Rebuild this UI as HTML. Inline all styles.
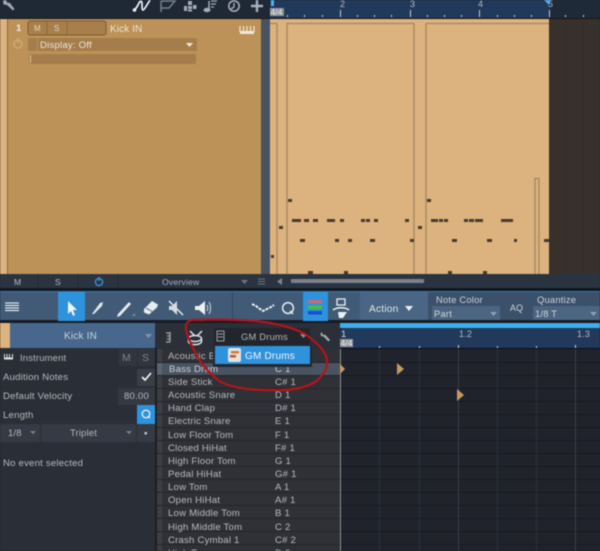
<!DOCTYPE html>
<html><head><meta charset="utf-8"><style>
html,body{margin:0;padding:0;background:#22262e;width:600px;height:551px;overflow:hidden}
svg{display:block;filter:blur(.4px)}
text{font-family:"Liberation Sans",sans-serif;font-size:9.6px;fill:#b7babe;letter-spacing:.2px}
.w{fill:none;stroke:#e8ebee;stroke-width:1.6}
.n{fill:#4a3a2c}
</style></head><body>
<svg width="600" height="551" viewBox="0 0 600 551" xmlns="http://www.w3.org/2000/svg">
<!-- arrange top bar -->
<rect width="270" height="18" fill="#1f2936"/>
<rect x="270" width="280" height="18" fill="#21395a"/>
<rect x="550" width="50" height="18" fill="#1f2a39"/>
<rect y="18" width="600" height="1" fill="#14181d"/>
<!-- top icons -->
<path d="M6 0l1.500 3 2-.5 5 6.500-1.500 1.500-6-5.500-3.500-.5-.5-4z" fill="#9fa7b0"/>
<path d="M134 10c2-1 3-3 5-7 1-2 3-3 3 1 0 3 0 6 1 6s4-5 7-10" fill="none" stroke="#eef1f4" stroke-width="1.700"/>
<circle cx="134.500" cy="10" r="1.800" fill="#eef1f4"/>
<path d="M161 12V1M161 1h14l-6 7h-8" fill="none" stroke="#77828f" stroke-width="1.400"/>
<path d="M188 1h4v4h-4zM193 5h3.500v4h-3.500zM188 6h4v3h-4zM184 6h3v5h-3zM188 9.500h4v2h-4z" fill="#a3abb4"/>
<path d="M209 1v9" stroke="#a3abb4" stroke-width="1.500"/><ellipse cx="207" cy="10" rx="3.500" ry="2.200" fill="#a3abb4"/>
<path d="M211 1h6M211 4h5M211 7h3" stroke="#a3abb4" stroke-width="1.300"/>
<circle cx="234" cy="6" r="5.200" fill="none" stroke="#a3abb4" stroke-width="1.600"/><path d="M234 3v4l-3 2" stroke="#a3abb4" stroke-width="1.400" fill="none"/>
<path d="M257 0v12M251 6h12" stroke="#a8b0b9" stroke-width="2.400"/>
<!-- ruler ticks -->
<g fill="#c8d0d9">
<rect x="340" y="10" width="1" height="7"/><rect x="410" y="10" width="1" height="7"/><rect x="479" y="10" width="1" height="7"/><rect x="549" y="10" width="1" height="7"/>
<rect x="304" y="15" width="1" height="2"/><rect x="322" y="15" width="1" height="2"/><rect x="357" y="15" width="1" height="2"/><rect x="374" y="15" width="1" height="2"/><rect x="391" y="15" width="1" height="2"/><rect x="427" y="15" width="1" height="2"/><rect x="444" y="15" width="1" height="2"/><rect x="461" y="15" width="1" height="2"/><rect x="497" y="15" width="1" height="2"/><rect x="514" y="15" width="1" height="2"/><rect x="531" y="15" width="1" height="2"/><rect x="565" y="15" width="1" height="2"/><rect x="583" y="15" width="1" height="2"/><rect x="287" y="15" width="1" height="2"/>
</g>
<text x="340" y="7" style="font-size:9px">2</text><text x="410" y="7" style="font-size:9px">3</text><text x="478" y="7" style="font-size:9px">4</text><text x="548" y="7" style="font-size:9px">5</text>
<path d="M544 0h7l-2 5z" fill="#55aee8"/>
<rect x="270" y="8" width="14" height="8" fill="#8e949a"/><text x="270.500" y="15" style="font-size:8.500px;fill:#eceef0;letter-spacing:0">4/4</text>
<path d="M271 0h3v6h-3z" fill="#4fb2f0"/>
<!-- track -->
<rect y="19" width="7" height="255" fill="#dcb27e"/>
<rect x="7" y="19" width="1" height="255" fill="#8a6a40"/>
<rect x="8" y="19" width="253" height="255" fill="#bd9259"/>
<rect x="261" y="19" width="9" height="255" fill="#49535f"/>
<rect x="28" y="21" width="78" height="14" rx="2" fill="#a87f4b" stroke="#7a5b34"/>
<path d="M47 21v14M67 21v14" stroke="#8a6a40"/>
<text x="16" y="31" style="fill:#f3e8d6;font-weight:bold">1</text>
<text x="34" y="31" style="font-size:8px;fill:#e3d5bf">M</text><text x="54" y="31" style="font-size:8px;fill:#e3d5bf">S</text>
<text x="110" y="32" style="fill:#efe4d2;font-size:9.800px">Kick IN</text>
<circle cx="18" cy="44" r="4" fill="none" stroke="#d0ab76" stroke-width="1.300"/><path d="M18 38v5" stroke="#d0ab76" stroke-width="1.300"/>
<rect x="28" y="38" width="169" height="13" fill="#a57d4c"/><rect x="37" y="38" width="1" height="13" fill="#b8905c"/>
<text x="40" y="48" style="fill:#efe6d8;font-size:9.600px">Display: Off</text>
<path d="M186 43h7l-3.500 4z" fill="#f2ead9"/>
<rect x="29" y="54" width="167" height="10" fill="#a57d4c"/><rect x="30" y="55" width="1" height="8" fill="#d8c19e"/>
<rect x="240" y="31" width="14" height="3" fill="#f0e7d8"/><path d="M240 26v6M243.500 26v6M247 26v6M250.500 26v6M254 26v6" stroke="#f0e7d8" stroke-width="1.200"/>
<!-- lanes -->
<rect x="270" y="19" width="280" height="255" fill="#dcb27e"/>
<rect x="549" y="19" width="51" height="255" fill="#38302b"/>
<path d="M566 19v255M583 19v255" stroke="#332c28"/>
<g fill="none" stroke="#a3875f" stroke-width="1.300">
<path d="M270 23.500h7V274"/>
<path d="M287 274V23.500h127V274"/>
<path d="M426 274V23.500h123"/>
<path d="M535 274V178.500h4V274"/>
</g>
<g class="n">
<rect x="288" y="199" width="4" height="3"/><rect x="427" y="199" width="4" height="3"/>
<rect x="292" y="219" width="9" height="3"/><rect x="304" y="219" width="5" height="3"/><rect x="313" y="219" width="5" height="3"/><rect x="327" y="219" width="8" height="3"/><rect x="340" y="219" width="4" height="3"/><rect x="361" y="219" width="4" height="3"/><rect x="366" y="219" width="4" height="3"/><rect x="374" y="219" width="4" height="3"/><rect x="405" y="219" width="4" height="3"/><rect x="431" y="219" width="7" height="3"/><rect x="439" y="219" width="4" height="3"/><rect x="444" y="219" width="4" height="3"/><rect x="464" y="219" width="4" height="3"/><rect x="469" y="219" width="5" height="3"/><rect x="475" y="219" width="8" height="3"/><rect x="501" y="219" width="12" height="3"/>
<rect x="279" y="226" width="4" height="3"/><rect x="418" y="226" width="4" height="3"/>
<rect x="300" y="239" width="5" height="3"/><rect x="335" y="239" width="4" height="3"/><rect x="348" y="239" width="4" height="3"/><rect x="370" y="239" width="5" height="3"/><rect x="410" y="239" width="4" height="3"/><rect x="452" y="239" width="5" height="3"/><rect x="487" y="239" width="5" height="3"/><rect x="514" y="239" width="3" height="3"/><rect x="544" y="239" width="5" height="3"/>
<rect x="271" y="255" width="3" height="3"/>
<rect x="308" y="271" width="5" height="3"/><rect x="344" y="271" width="4" height="3"/><rect x="448" y="271" width="4" height="3"/><rect x="483" y="271" width="4" height="3"/>
</g>
<!-- overview bar -->
<rect y="274" width="600" height="14" fill="#2a3441"/>
<path d="M38 274v14M78 274v14M118 274v14" stroke="#222a35"/>
<text x="14" y="285" style="font-size:8.500px">M</text><text x="55" y="285" style="font-size:8.500px">S</text>
<circle cx="99" cy="282" r="3.600" fill="none" stroke="#3a8fd0" stroke-width="1.400"/><path d="M99 277v4" stroke="#3a8fd0" stroke-width="1.400"/>
<text x="162" y="285" style="font-size:8.600px;fill:#a8aeb5">Overview</text>
<path d="M241 280h7l-3.500 4z" fill="#6c7580"/>
<path d="M258 279h7M258 281.500h7M258 284h7" stroke="#6c7580"/>
<path d="M282 278v7l-5-3.500z" fill="#7c8590"/>
<rect x="291" y="279" width="133" height="4" fill="#7c8088"/>
<rect y="288" width="600" height="3" fill="#14181e"/>
<rect y="291" width="600" height="1.500" fill="#2a7fc0"/>
<!-- toolbar -->
<rect y="292" width="600" height="28" fill="#415a76"/>
<rect x="360" y="292" width="68" height="28" fill="#4a6684"/>
<rect x="428" y="292" width="172" height="28" fill="#3b516a"/>
<rect x="232" y="292" width="1" height="28" fill="#34475e"/>
<rect y="320" width="600" height="3" fill="#191c22"/>
<path d="M5 303h14M5 305.500h14M5 308h14M5 310.500h14" stroke="#dfe4e9" stroke-width="1.200"/>
<rect x="58" y="292" width="27" height="29" fill="#2e92dc"/>
<path d="M68 301v13l3-3 2 5 2-1-2-5h4z" fill="#f1f4f7"/>
<path d="M92 314l8-11 3-1-1 4-8 8z" fill="#e2e6ea"/>
<path d="M118 314l11-12 2 2-11 12-3 1z" fill="#e8ebef"/>
<path d="M132 316h3v-3z" fill="#7f93a8"/>
<path d="M144 309l8-8 6 3.500-1 3-8 7-5-2z" fill="#e8ebef"/>
<path d="M146 308l6 3.500" stroke="#415a76"/>
<path d="M169 301l14 14" stroke="#e8ebef" stroke-width="1.400"/><path d="M169 306h3l5-5v14l-5-5h-3z" fill="#d5dbe1"/>
<path d="M195 306h4l6-5v14l-6-5h-4z" fill="#eef1f4"/><path d="M207 305c1 2 1 4 0 6M209 302c2 3 2 9 0 12" fill="none" stroke="#d5dbe1" stroke-width="1"/>
<path d="M252 304l4 2 4 3 3 2 4-2 4-2 3-2" fill="none" stroke="#eef1f4" stroke-width="2" stroke-dasharray="3 1"/>
<circle cx="288" cy="308" r="5.400" fill="none" stroke="#e8ebef" stroke-width="1.500"/><path d="M290 311l3 3" stroke="#e8ebef" stroke-width="1.500"/>
<rect x="303" y="292" width="25" height="29" fill="#2e92dc"/>
<rect x="308" y="300" width="14" height="3.500" fill="#c7697b"/><rect x="308" y="305.500" width="14" height="3.500" fill="#3fc040"/><rect x="308" y="311" width="14" height="3.500" fill="#1a50c8"/>
<path d="M337 299h8v6h-8z" fill="none" stroke="#eef1f4" stroke-width="1.300"/><path d="M333 310c4-3 12-3 16 0" fill="none" stroke="#eef1f4" stroke-width="1.600"/><path d="M338 312h9l-4 6h-4z" fill="#eef1f4"/>
<text x="369" y="312" style="font-size:10.200px;fill:#dfe4e9">Action</text>
<path d="M405 306h8l-4 5z" fill="#eef1f4"/>
<text x="436" y="303" style="font-size:9.400px;fill:#ccd2d8">Note Color</text>
<rect x="432" y="306" width="68" height="14" fill="#4c6580"/>
<text x="434" y="317" style="font-size:9.400px;fill:#d0d5da">Part</text>
<path d="M490 312h7l-3.500 4z" fill="#8ea0b2"/>
<text x="510" y="311" style="font-size:8.800px;fill:#cfd5da">AQ</text>
<text x="537" y="303" style="font-size:9.400px;fill:#ccd2d8">Quantize</text>
<rect x="533" y="306" width="67" height="14" fill="#4c6580"/>
<text x="535" y="317" style="font-size:9.400px;fill:#d0d5da">1/8 T</text>
<path d="M590 312h7l-3.500 4z" fill="#8ea0b2"/>
<!-- editor header -->
<rect y="323" width="10" height="25" fill="#dcb27e"/>
<rect x="10" y="323" width="145" height="25" fill="#47678c"/>
<rect x="155" y="323" width="185" height="26" fill="#2b2f38"/>
<text x="64" y="339" style="font-size:10px;fill:#c8d2dd">Kick IN</text>
<path d="M145 334h7l-3.500 4z" fill="#7f97b0"/>
<path d="M170 332v10M166 333h4M167 336h3M167 339h3M166 342h4" stroke="#a2a6ac" stroke-width="1.300"/>
<ellipse cx="195" cy="338.500" rx="6.500" ry="3" fill="none" stroke="#dfe2e5" stroke-width="1.500"/><path d="M188.500 338.500v3.500c2 3.500 11 3.500 13 0v-3.500M190 331l5 5M202 331l-5 5" fill="none" stroke="#dfe2e5" stroke-width="1.500"/>
<rect x="214" y="328" width="96" height="17" fill="#22252c"/>
<path d="M217 331h7v10h-7zM218 334h5M218 337h5" fill="none" stroke="#9ea2a8"/>
<text x="241" y="340" style="font-size:9.400px;fill:#b2b5ba">GM Drums</text>
<path d="M300 334h7l-3.500 4z" fill="#8d9197"/>
<path d="M322 332.500l1 2.500 2-.5 5 5.500-1.500 1.500-5-5-2.500-.5-.5-3z" fill="#a5a9ae"/>
<!-- editor ruler -->
<rect x="340" y="323" width="260" height="5" fill="#3eaeec"/>
<path d="M340 348v-16q0-4 5-4h255v20z" fill="#21395a"/>
<rect x="340" y="339" width="13" height="8" fill="#8e949a"/><text x="340.500" y="346" style="font-size:8.500px;fill:#eceef0;letter-spacing:0">4/4</text>
<text x="341" y="337" style="font-size:9.400px;fill:#d5dae0">1</text><text x="459" y="337" style="font-size:9px">1.2</text><text x="577" y="337" style="font-size:9px">1.3</text>
<g fill="#cfd6dd"><rect x="379" y="346" width="1" height="2"/><rect x="419" y="346" width="1" height="2"/><rect x="458" y="345" width="1" height="3"/><rect x="497" y="346" width="1" height="2"/><rect x="536" y="346" width="1" height="2"/><rect x="575" y="345" width="1" height="3"/></g>
<rect x="340" y="348" width="260" height="1.500" fill="#0d0f13"/>
<!-- grid -->
<rect x="340" y="349" width="260" height="202" fill="#20232b"/>
<g stroke="#171a20">
<path d="M340 362.500h260M340 375.500h260M340 388.500h260M340 401.500h260M340 414.500h260M340 427.500h260M340 440.500h260M340 453.500h260M340 466.500h260M340 479.500h260M340 492.500h260M340 505.500h260M340 518.500h260M340 531.500h260M340 544.500h260"/>
</g>
<path d="M379.500 349v202M497.500 349v202M536.500 349v202M419.500 349v202" stroke="#2b2f39"/>
<path d="M458.500 349v202M575.500 349v202" stroke="#3a3f49"/>
<path d="M340.500 349v202" stroke="#8c9097"/>
<path d="M340 364l5 5-5 5z" fill="#c69a5f"/>
<path d="M397 363l7 6-7 6z" fill="#c69a5f"/>
<path d="M457 389l7 6-7 6z" fill="#c69a5f"/>
<!-- left panel -->
<rect y="348" width="155" height="203" fill="#2a2e37"/>
<rect x="155" y="348" width="2" height="203" fill="#1b1e24"/>
<rect x="4" y="357.500" width="9" height="2" fill="#dfe2e5"/><path d="M4.500 354v5M7 354v5M9.500 354v5M12.500 354v5" stroke="#dfe2e5"/>
<text x="20" y="361" style="font-size:9.400px">Instrument</text>
<rect x="119" y="349" width="18" height="17" fill="#31353e"/><rect x="138" y="349" width="17" height="17" fill="#31353e"/>
<text x="122" y="361" style="font-size:10.500px;fill:#7f848c">M</text><text x="142" y="361" style="font-size:10.500px;fill:#7f848c">S</text>
<text x="3" y="380" style="font-size:9.600px">Audition Notes</text>
<rect x="137" y="369" width="18" height="17" fill="#3a3e46"/>
<path d="M142 377l3 3 6-7" fill="none" stroke="#f1f3f5" stroke-width="1.700"/>
<text x="3" y="399" style="font-size:9.600px">Default Velocity</text>
<rect x="118" y="388" width="37" height="17" fill="#353942"/>
<text x="124" y="399" style="font-size:9.600px">80.00</text>
<text x="3" y="418" style="font-size:9.600px">Length</text>
<rect x="137" y="405" width="18" height="19" fill="#2e92dc"/>
<circle cx="146" cy="414" r="3.800" fill="none" stroke="#eaf2f8" stroke-width="1.300"/><path d="M148 416l2 2" stroke="#eaf2f8" stroke-width="1.300"/>
<rect y="424" width="40" height="18" fill="#353a44"/><rect x="41" y="424" width="95" height="18" fill="#353a44"/><rect x="137" y="424" width="18" height="18" fill="#353a44"/>
<text x="8" y="436" style="font-size:9.400px">1/8</text><path d="M30 431h6l-3 3.500z" fill="#737a84"/>
<text x="70" y="436" style="font-size:9.400px">Triplet</text><path d="M126 431h6l-3 3.500z" fill="#737a84"/>
<rect x="144.500" y="432" width="2.500" height="2.500" fill="#c2c5c9"/>
<text x="3" y="466" style="font-size:9.600px">No event selected</text>
<!-- drum list -->
<rect x="157" y="349" width="183" height="202" fill="#2f3136"/>
<rect x="157" y="349" width="5" height="202" fill="#3c3e43"/>
<rect x="162" y="362.500" width="178" height="13" fill="#4a5361"/>
<rect x="157" y="362.500" width="5" height="13" fill="#5a6472"/>
<g stroke="#24262b">
<path d="M157 362.500h183M157 375.500h183M157 388.500h183M157 401.500h183M157 414.500h183M157 427.500h183M157 440.500h183M157 453.500h183M157 466.500h183M157 479.500h183M157 492.500h183M157 505.500h183M157 518.500h183M157 531.500h183M157 544.500h183"/>
</g>
<g>
<text x="168" y="359">Acoustic Bass Drum</text>
<text x="169" y="372" style="fill:#cdd0d4">Bass Drum</text><text x="275" y="372" style="fill:#cdd0d4">C 1</text>
<text x="168" y="385">Side Stick</text><text x="275" y="385">C# 1</text>
<text x="168" y="398">Acoustic Snare</text><text x="275" y="398">D 1</text>
<text x="168" y="411">Hand Clap</text><text x="275" y="411">D# 1</text>
<text x="168" y="424">Electric Snare</text><text x="275" y="424">E 1</text>
<text x="168" y="438">Low Floor Tom</text><text x="275" y="438">F 1</text>
<text x="168" y="451">Closed HiHat</text><text x="275" y="451">F# 1</text>
<text x="168" y="464">High Floor Tom</text><text x="275" y="464">G 1</text>
<text x="168" y="477">Pedal HiHat</text><text x="275" y="477">G# 1</text>
<text x="168" y="490">Low Tom</text><text x="275" y="490">A 1</text>
<text x="168" y="503">Open HiHat</text><text x="275" y="503">A# 1</text>
<text x="168" y="516">Low Middle Tom</text><text x="275" y="516">B 1</text>
<text x="168" y="530">High Middle Tom</text><text x="275" y="530">C 2</text>
<text x="168" y="543">Crash Cymbal 1</text><text x="275" y="543">C# 2</text>
<text x="168" y="556">High Tom</text><text x="275" y="556">D 2</text>
</g>
<!-- popup -->
<rect x="213" y="345" width="99" height="22" fill="#24272d"/>
<rect x="215" y="346" width="95" height="18" fill="#2e92dc"/>
<rect x="228" y="348" width="13" height="14" rx="2" fill="#e3e3e0"/>
<rect x="231" y="351" width="8" height="2.500" fill="#d97a35"/><rect x="230" y="355" width="6" height="2.500" fill="#c9552f"/>
<text x="245" y="359" style="font-size:10px;fill:#f1f5f8">GM Drums</text>
<!-- red scribble -->
<path d="M197 320C192 319 187 321 186 325C185 332 190 342 196 354C201 364 208 372 218 380C228 387 245 390 270 390C290 391 305 388 315 382C323 376 328 368 327 360C326 352 318 343 305 334C292 327 275 323 255 321C240 320 215 319 197 320" fill="none" stroke="#b5141c" stroke-width="2.200"/>
</svg>
</body></html>
